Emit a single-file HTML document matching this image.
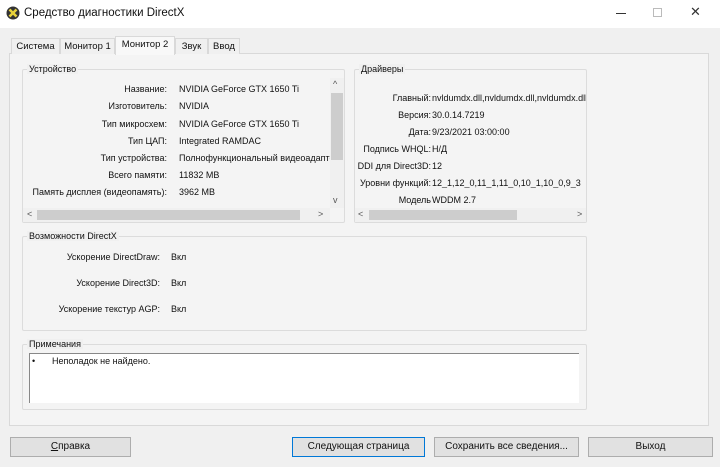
<!DOCTYPE html><html><head><meta charset="utf-8"><style>
*{box-sizing:border-box;margin:0;padding:0}
body{width:720px;height:467px;background:#f0f0f0;font-family:"Liberation Sans","DejaVu Sans",sans-serif;font-size:9px;color:#111;position:relative;overflow:hidden}
.a{position:absolute}
.grp{position:absolute;border:1px solid #dcdcdc;border-radius:2px}
.lg{position:absolute;top:-6px;left:4px;background:#f0f0f0;padding:0 2px;font-size:9px}
.r{position:absolute;text-align:right;white-space:nowrap}
.v{position:absolute;white-space:nowrap}
.tab{position:absolute;top:38px;height:16px;border:1px solid #d9d9d9;border-bottom:none;background:#f0f0f0;font-size:9.5px;padding:2px 0 0;text-align:center;white-space:nowrap;overflow:hidden}
.btn{position:absolute;top:437px;height:20px;background:#e1e1e1;border:1px solid #adadad;font-size:10px;text-align:center;line-height:18px}
</style></head><body>
<div class="a" style="left:0;top:0;width:720px;height:28px;background:#fff"></div>
<svg class="a" style="left:6px;top:6px" width="14" height="14" viewBox="0 0 14 14"><circle cx="7" cy="7" r="6.5" fill="#333"/><path d="M3.5 3.5L10.5 10.5M10.5 3.5L3.5 10.5" stroke="#e8d23a" stroke-width="2.6"/></svg>
<div class="a" style="left:24px;top:7px;font-size:11.5px">Средство диагностики DirectX</div>
<div class="a" style="left:616px;top:13px;width:10px;height:1px;background:#333"></div>
<div class="a" style="left:653px;top:8px;width:9px;height:9px;border:1px solid #bbb"></div>
<div class="a" style="left:690px;top:4px;font-size:13px;color:#333">✕</div>
<div class="a" style="left:9px;top:53px;width:700px;height:373px;border:1px solid #d9d9d9;background:#f4f4f4"></div>
<div class="tab" style="left:11px;width:49px">Система</div>
<div class="tab" style="left:60px;width:55px">Монитор 1</div>
<div class="tab" style="left:115px;width:60px;top:36px;height:19px;background:#f8f8f8">Монитор 2</div>
<div class="tab" style="left:175px;width:33px">Звук</div>
<div class="tab" style="left:208px;width:32px">Ввод</div>

<div class="grp" style="left:22px;top:69px;width:323px;height:154px"><span class="lg">Устройство</span></div>
<div class="r" style="left:24px;width:143px;top:84px">Название:</div><div class="v" style="left:179px;top:84px">NVIDIA GeForce GTX 1650 Ti</div>
<div class="r" style="left:24px;width:143px;top:101px">Изготовитель:</div><div class="v" style="left:179px;top:101px">NVIDIA</div>
<div class="r" style="left:24px;width:143px;top:119px">Тип микросхем:</div><div class="v" style="left:179px;top:119px">NVIDIA GeForce GTX 1650 Ti</div>
<div class="r" style="left:24px;width:143px;top:136px">Тип ЦАП:</div><div class="v" style="left:179px;top:136px">Integrated RAMDAC</div>
<div class="r" style="left:24px;width:143px;top:153px">Тип устройства:</div><div class="v" style="left:179px;top:153px;width:151px;overflow:hidden">Полнофункциональный видеоадаптер</div>
<div class="r" style="left:24px;width:143px;top:170px">Всего памяти:</div><div class="v" style="left:179px;top:170px">11832 MB</div>
<div class="r" style="left:24px;width:143px;top:187px">Память дисплея (видеопамять):</div><div class="v" style="left:179px;top:187px">3962 MB</div>
<div class="a" style="left:330px;top:78px;width:14px;height:130px;background:#f0f0f0"></div>
<div class="a" style="left:331px;top:93px;width:12px;height:67px;background:#cdcdcd"></div>
<div class="a" style="left:333px;top:79px;font-size:9px;color:#555">^</div>
<div class="a" style="left:333px;top:195px;font-size:9px;color:#555">v</div>
<div class="a" style="left:23px;top:208px;width:307px;height:14px;background:#f0f0f0"></div>
<div class="a" style="left:37px;top:210px;width:263px;height:10px;background:#cdcdcd"></div>
<div class="a" style="left:27px;top:209px;color:#555">&lt;</div><div class="a" style="left:318px;top:209px;color:#555">&gt;</div>

<div class="grp" style="left:354px;top:69px;width:233px;height:154px"><span class="lg">Драйверы</span></div>
<div class="r" style="left:356px;width:75px;top:93px">Главный:</div><div class="v" style="left:432px;top:93px;width:154px;overflow:hidden">nvldumdx.dll,nvldumdx.dll,nvldumdx.dll</div>
<div class="r" style="left:356px;width:75px;top:110px">Версия:</div><div class="v" style="left:432px;top:110px">30.0.14.7219</div>
<div class="r" style="left:356px;width:75px;top:127px">Дата:</div><div class="v" style="left:432px;top:127px">9/23/2021 03:00:00</div>
<div class="r" style="left:356px;width:75px;top:144px">Подпись WHQL:</div><div class="v" style="left:432px;top:144px">Н/Д</div>
<div class="r" style="left:356px;width:75px;top:161px">DDI для Direct3D:</div><div class="v" style="left:432px;top:161px">12</div>
<div class="r" style="left:356px;width:75px;top:178px">Уровни функций:</div><div class="v" style="left:432px;top:178px;width:154px;overflow:hidden">12_1,12_0,11_1,11_0,10_1,10_0,9_3</div>
<div class="r" style="left:356px;width:75px;top:195px">Модель</div><div class="v" style="left:432px;top:195px">WDDM 2.7</div>
<div class="a" style="left:355px;top:208px;width:231px;height:14px;background:#f0f0f0"></div>
<div class="a" style="left:369px;top:210px;width:148px;height:10px;background:#cdcdcd"></div>
<div class="a" style="left:358px;top:209px;color:#555">&lt;</div><div class="a" style="left:577px;top:209px;color:#555">&gt;</div>

<div class="grp" style="left:22px;top:236px;width:565px;height:95px"><span class="lg">Возможности DirectX</span></div>
<div class="r" style="left:24px;width:136px;top:252px">Ускорение DirectDraw:</div><div class="v" style="left:171px;top:252px">Вкл</div>
<div class="r" style="left:24px;width:136px;top:278px">Ускорение Direct3D:</div><div class="v" style="left:171px;top:278px">Вкл</div>
<div class="r" style="left:24px;width:136px;top:304px">Ускорение текстур AGP:</div><div class="v" style="left:171px;top:304px">Вкл</div>

<div class="grp" style="left:22px;top:344px;width:565px;height:66px"><span class="lg">Примечания</span></div>
<div class="a" style="left:29px;top:353px;width:550px;height:50px;background:#fff;border-top:1px solid #888;border-left:1px solid #888"></div>
<div class="a" style="left:32px;top:356px">•</div><div class="a" style="left:52px;top:356px">Неполадок не найдено.</div>

<div class="btn" style="left:10px;width:121px"><u>С</u>правка</div>
<div class="btn" style="left:292px;width:133px;border:1px solid #0078d7">Следующая страница</div>
<div class="btn" style="left:434px;width:145px">Сохранить все сведения...</div>
<div class="btn" style="left:588px;width:125px">Выход</div>
</body></html>
